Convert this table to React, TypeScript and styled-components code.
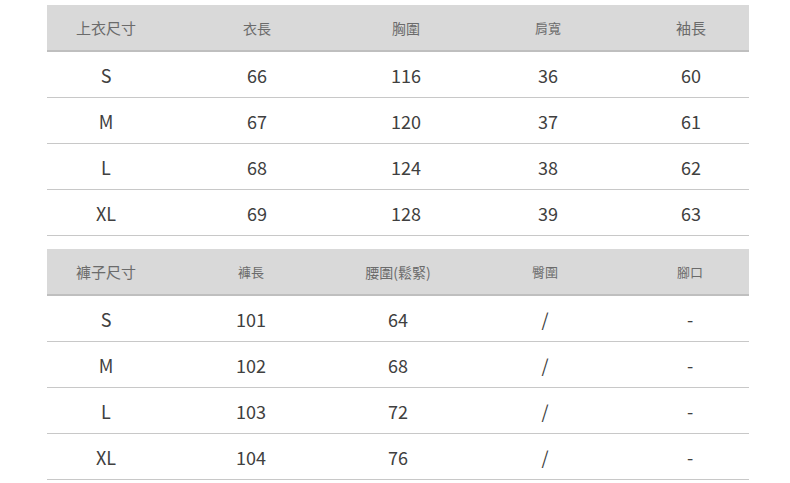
import React from "react";
import styled, { createGlobalStyle } from "styled-components";

const GlobalStyle = createGlobalStyle`
  body {
    margin: 0;
    background: #ffffff;
    font-family: "Noto Sans CJK TC", "Noto Sans", sans-serif;
  }
`;

const Page = styled.div`
  width: 790px;
  height: 483px;
  padding: 5px 0 0 47px;
  box-sizing: border-box;
  display: flex;
  flex-direction: column;
  gap: 13px;
`;

const Table = styled.div`
  width: 702px;
  display: flex;
  flex-direction: column;
`;

const Row = styled.div<{ $cols: string; $head?: boolean }>`
  display: grid;
  grid-template-columns: ${(p) => p.$cols};
  height: ${(p) => (p.$head ? 47 : 46)}px;
  box-sizing: border-box;
  align-items: center;
  background: ${(p) => (p.$head ? "#d9d9d9" : "#ffffff")};
  border-bottom: ${(p) => (p.$head ? "2px solid #bfbfbf" : "1px solid #c8c8c8")};
`;

const HeadCell = styled.div<{ $size?: number }>`
  text-align: center;
  font-family: "Noto Sans CJK TC", "Noto Sans", sans-serif;
  font-size: ${(p) => p.$size ?? 14}px;
  color: #6b6b6b;
  line-height: 1;
`;

const Cell = styled.div`
  text-align: center;
  font-family: "Noto Sans CJK TC", "Noto Sans", sans-serif;
  font-size: 18px;
  color: #404040;
  line-height: 1;
`;

const topCols = "118px 184px 114px 170px 116px";
const bottomCols = "118px 172px 122px 172px 118px";

const tops = [
  ["S", "66", "116", "36", "60"],
  ["M", "67", "120", "37", "61"],
  ["L", "68", "124", "38", "62"],
  ["XL", "69", "128", "39", "63"],
];

const pants = [
  ["S", "101", "64", "/", "-"],
  ["M", "102", "68", "/", "-"],
  ["L", "103", "72", "/", "-"],
  ["XL", "104", "76", "/", "-"],
];

const App: React.FC = () => {
  return (
    <>
      <GlobalStyle />
      <Page>
        <Table>
          <Row $cols={topCols} $head>
            <HeadCell $size={15}>上衣尺寸</HeadCell>
            <HeadCell>衣長</HeadCell>
            <HeadCell>胸圍</HeadCell>
            <HeadCell $size={13}>肩寬</HeadCell>
            <HeadCell $size={15}>袖長</HeadCell>
          </Row>
          {tops.map((r) => (
            <Row $cols={topCols} key={r[0]}>
              {r.map((v, i) => (
                <Cell key={i}>{v}</Cell>
              ))}
            </Row>
          ))}
        </Table>
        <Table>
          <Row $cols={bottomCols} $head>
            <HeadCell $size={15}>褲子尺寸</HeadCell>
            <HeadCell $size={13}>褲長</HeadCell>
            <HeadCell $size={14}>腰圍(鬆緊)</HeadCell>
            <HeadCell $size={13}>臀圍</HeadCell>
            <HeadCell $size={13}>腳口</HeadCell>
          </Row>
          {pants.map((r) => (
            <Row $cols={bottomCols} key={r[0]}>
              {r.map((v, i) => (
                <Cell key={i}>{v}</Cell>
              ))}
            </Row>
          ))}
        </Table>
      </Page>
    </>
  );
};

export default App;
